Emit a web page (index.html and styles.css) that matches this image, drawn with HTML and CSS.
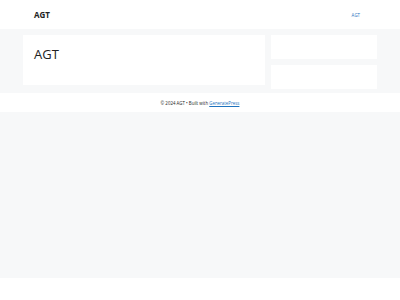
FILE: index.html
```html
<!DOCTYPE html>
<html lang="en">
<head>
	<meta charset="UTF-8">
	<meta name="viewport" content="width=device-width, initial-scale=1.0">
	<title>AGT</title>
	<link rel="stylesheet" href="styles.css">
</head>
<body>
	<header class="site-header">
		<div class="site-title">AGT</div>
		<nav class="main-nav"><a href="#">AGT</a></nav>
	</header>

	<section class="site-content">
		<article class="content-card">
			<h1 class="page-title">AGT</h1>
		</article>
		<aside class="sidebar">
			<div class="widget"></div>
			<div class="widget"></div>
		</aside>
	</section>

	<footer class="site-footer">
		<span>&copy; 2024 AGT &bull; Built with <a href="#">GeneratePress</a></span>
	</footer>
	<div class="page-fill"></div>
</body>
</html>
```

FILE: styles.css
```css
*{margin:0; padding:0; box-sizing:border-box;}
body{
	background:#fff;
	font-family:"Open Sans","Noto Sans",sans-serif;
	color:#222;
}
a{color:#1e73be;}
.site-header{
	display:flex;
	justify-content:space-between;
	align-items:center;
	height:29px;
	padding:0 40px 0 34px;
	background:#fff;
}
.site-title{
	font-size:8px;
	line-height:10px;
	font-weight:700;
	color:#222;
}
.main-nav{
	font-size:4.4px;
	line-height:6px;
}
.main-nav a{
	text-decoration:none;
	color:#1e73be;
}
.site-content{
	display:flex;
	gap:6px;
	padding:6px 23px 4px;
	background:#f7f8f9;
}
.content-card{
	width:242px;
	height:50px;
	padding:11px 11px 0;
	background:#fff;
}
.page-title{
	font-size:13px;
	font-weight:400;
	line-height:16px;
	color:#222;
}
.sidebar{
	display:flex;
	flex-direction:column;
	gap:6px;
	flex:1;
}
.widget{
	height:24px;
	background:#fff;
}
.site-footer{
	display:flex;
	justify-content:center;
	align-items:center;
	height:19px;
	background:#fff;
	font-size:4.4px;
	line-height:6px;
	color:#222;
}
.page-fill{
	height:166px;
	background:#f7f8f9;
}
```
